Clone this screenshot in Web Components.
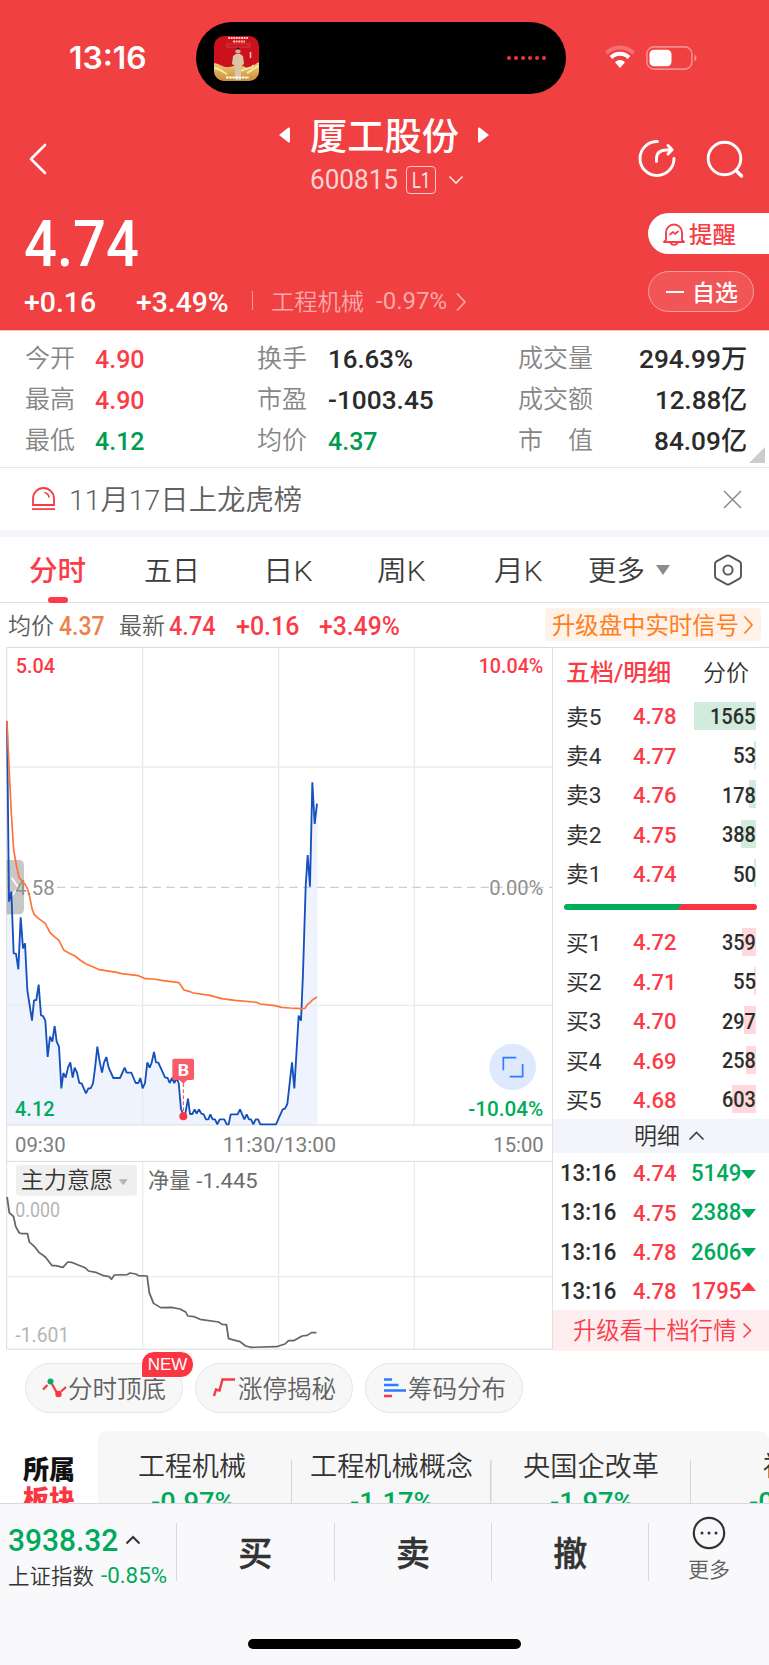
<!DOCTYPE html>
<html lang="zh-CN">
<head>
  <meta charset="UTF-8">
  <title>厦工股份 600815</title>
  <style>
    body {
      margin: 0;
      width: 769px;
      height: 1665px;
      overflow: hidden;
      background: #fff;
      color: #333;
      font-family: Roboto, "Noto Sans CJK SC", sans-serif;
      line-height: 1;
    }
  </style>
</head>
<body>
  <stock-page></stock-page>

  <script>
    // shared behaviour: open shadow root, template and styles
    class BaseElement extends HTMLElement {
      constructor() {
        super();
        this.attachShadow({ mode: 'open' });
      }

      getMarkup() {
        return '<slot></slot>';
      }

      getStyles() {
        return '';
      }

      render() {
        const template = document.createElement('template');
        template.innerHTML = `
          <style>
            :host { display: block; box-sizing: border-box; }
            * { box-sizing: border-box; }
            svg { display: block; flex: none; fill: none; }
            ${this.getStyles()}
          </style>
          ${this.getMarkup()}
        `;
        this.shadowRoot.replaceChildren(template.content.cloneNode(true));
      }

      connectedCallback() {
        this.render();
      }
    }

    // one line of text, condensed or stretched to the width in "w"
    class FitText extends BaseElement {
      getMarkup() {
        return '<span><slot></slot></span>';
      }

      getStyles() {
        const w = this.getAttribute('w');
        const size = this.getAttribute('size');
        return `
          :host { display: block; flex: none; width: ${w}px; font-size: ${size}px; line-height: 1; white-space: nowrap; }
          span { display: inline-block; vertical-align: top; transform-origin: 0 50%; }
        `;
      }

      connectedCallback() {
        this.render();
        const span = this.shadowRoot.querySelector('span');
        const natural = span.offsetWidth;
        // Han glyphs sit a little higher in the line than the digits
        const drop = /^[\u3000-\u9fff]/.test(this.textContent) ? 1.6 : 0.8;
        if (natural) {
          span.style.transform = `translateY(${drop}px) scaleX(${this.getAttribute('w') / natural})`;
        }
      }
    }

    class StatusBar extends BaseElement {
      getMarkup() {
        return `
          <fit-text class="time" w="78" size="31">13:16</fit-text>
          <div class="island">
            <svg width="45" height="45" viewBox="0 0 45 45">
              <defs>
                <clipPath id="cover"><rect width="45" height="45" rx="10"/></clipPath>
                <linearGradient id="gold" x1="0" y1="0" x2="0" y2="1">
                  <stop offset="0" stop-color="#f0cf78"/><stop offset="1" stop-color="#c78f3c"/>
                </linearGradient>
              </defs>
              <g clip-path="url(#cover)">
                <rect width="45" height="45" fill="#cb111c"/>
                <path d="M0 27c7 1 9 5 15 4s10-4 16 0 9-3 14-5v19H0z" fill="url(#gold)"/>
                <path d="M0 32c6 0 8 4 13 6M45 30c-5 2-8 5-12 7M27 35c5-4 9-1 13-6" stroke="#fae6a5" stroke-width="2"/>
                <path d="M14 2h20M19 5.500h12" stroke="#f3c6b8" stroke-width="2" stroke-dasharray="2 .6"/>
                <rect x="13" y="8" width="23" height="3" stroke="#de5a57" stroke-width=".6"/>
                <path d="M19 20l3-2h4l3 2 1 8-3 2v14h-6V30l-3-2z" fill="#dcc5a6"/>
                <circle cx="24" cy="15" r="2.600" fill="#dba98b"/>
                <path d="M21.500 14.500c0-4 5-4 5 0l-1-1h-3z" fill="#372020"/>
                <path d="M36.500 16v6" stroke="#f3c6b8" stroke-width="1.500"/>
                <path d="M12 41.500h23" stroke="#fff" stroke-width="2" stroke-dasharray="2.500 .7"/>
              </g>
            </svg>
            <div class="dots"><i></i><i></i><i></i><i></i><i></i><i></i></div>
          </div>
          <svg class="wifi" width="32" height="24" viewBox="0 0 32 24">
            <path d="M2.500 8C10 .5 22 .5 29.500 8" stroke="#fff" stroke-opacity=".25" stroke-width="4"/>
            <path d="M7 12.500c5-5 13-5 18 0" stroke="#fff" stroke-width="4"/>
            <path d="M11 17.200c3-3 7-3 10 0L16 23z" fill="#fff"/>
          </svg>
          <svg width="52" height="24" viewBox="0 0 52 24">
            <rect x=".9" y=".9" width="45" height="22.200" rx="7" stroke="#fff" stroke-opacity=".4" stroke-width="1.600"/>
            <rect x="3.500" y="3.700" width="22" height="16.600" rx="4.500" fill="#fff"/>
            <path d="M48.500 8.500c2.600 1.500 2.600 5.500 0 7z" fill="#fff" fill-opacity=".45"/>
          </svg>
        `;
      }

      getStyles() {
        return `
          :host { display: flex; align-items: center; height: 116px; padding-left: 69px; color: #fff; }
          .time { margin-top: -4px; font-family: Inter, sans-serif; font-weight: 600; }
          .island {
            display: flex; align-items: center; justify-content: space-between;
            width: 370px; height: 72px; margin: 0 39px 0 49px; padding: 0 20px 0 18px;
            border-radius: 36px; background: #000;
          }
          .dots { display: flex; gap: 3px; }
          .dots i { width: 4px; height: 4px; border-radius: 2px; background: #f2343c; }
          .wifi { margin: -2px 10px 0 -1px; }
          .wifi + svg { margin-top: -1px; }
        `;
      }
    }

    class TitleBar extends BaseElement {
      getMarkup() {
        return `
          <svg class="icon" width="20" height="34" viewBox="0 0 20 34">
            <path d="M17 3L3 17l14 14" stroke="#fff" stroke-width="2.600" stroke-linecap="round" stroke-linejoin="round"/>
          </svg>
          <div class="middle">
            <div class="name">
              <svg width="13" height="18" viewBox="0 0 13 18"><path d="M1 9L10.500 1.500Q12 1 12 3v12q0 2-1.500 1.500z" fill="#fff"/></svg>
              <fit-text w="149" size="37">厦工股份</fit-text>
              <svg width="13" height="18" viewBox="0 0 13 18"><path d="M12 9L2.500 1.500Q1 1 1 3v12q0 2 1.500 1.500z" fill="#fff"/></svg>
            </div>
            <div class="code">
              <fit-text w="88" size="27">600815</fit-text>
              <span class="level"><fit-text w="18" size="22">L1</fit-text></span>
              <svg width="16" height="10" viewBox="0 0 16 10"><path d="M1.500 1.500L8 8l6.500-6.500" stroke="#fde0e0" stroke-width="1.600"/></svg>
            </div>
          </div>
          <svg class="icon share" width="40" height="40" viewBox="0 0 40 40" stroke="#fff" stroke-width="2.900" stroke-linecap="round" stroke-linejoin="round">
            <path d="M19.500 2.500A17 17 0 1 0 36 19.500"/>
            <path d="M18.500 22.500V20q0-9 10-9h5M30 6.500l4.200 4.300-4.200 4.200"/>
          </svg>
          <svg class="icon" width="40" height="40" viewBox="0 0 40 40" stroke="#fff" stroke-width="2.900" stroke-linecap="round">
            <circle cx="18.500" cy="19.500" r="16.300"/><path d="M31 32.500l4.500 4.500" stroke-width="3.600"/>
          </svg>
        `;
      }

      getStyles() {
        return `
          :host { display: flex; align-items: center; height: 88px; padding-left: 28px; color: #fff; }
          .icon { margin-top: -3px; }
          .middle { width: 212px; height: 88px; margin: 0 148px 0 230px; }
          .name { display: flex; align-items: center; justify-content: space-between; height: 38px; font-weight: 500; }
          .code { display: flex; align-items: center; height: 51px; padding-left: 32px; color: #fcd3d3; }
          .level {
            display: flex; align-items: center; justify-content: center; width: 30px; height: 28px;
            margin: 0 12px 0 8px; border: 1.3px solid #fbc9c9; border-radius: 4px; color: #fdeaea;
          }
          .share { margin-right: 28px; }
        `;
      }
    }

    class PriceHead extends BaseElement {
      getMarkup() {
        return `
          <div class="left">
            <div class="price"><fit-text w="115" size="64">4.74</fit-text></div>
            <div class="change">
              <fit-text w="72" size="28">+0.16</fit-text>
              <fit-text class="pct" w="93" size="28">+3.49%</fit-text>
              <i></i>
              <fit-text class="soft" w="93" size="23">工程机械</fit-text>
              <fit-text class="soft num" w="71" size="23">-0.97%</fit-text>
              <svg width="12" height="20" viewBox="0 0 12 20"><path d="M2 1.500L10 10 2 18.500" stroke="#f9a9aa" stroke-width="1.600"/></svg>
            </div>
          </div>
          <div class="right">
            <div class="pill alert">
              <svg width="24" height="24" viewBox="0 0 24 24" stroke="#f83c45" stroke-width="1.900" stroke-linejoin="round" stroke-linecap="round">
                <path d="M4 18V10.500a8 8 0 0 1 16 0V18l2 2H2z"/><path d="M8.500 21c1.500 2.500 5.500 2.500 7 0"/>
                <path d="M8 12.500l3-2.500 2 2 3-2.500" stroke-width="1.700"/>
              </svg>
              <fit-text w="47" size="23">提醒</fit-text>
            </div>
            <div class="pill own"><b></b><fit-text w="46" size="23">自选</fit-text></div>
          </div>
        `;
      }

      getStyles() {
        return `
          :host { display: flex; justify-content: space-between; height: 126px; padding-left: 24px; color: #fff; }
          .price { display: flex; align-items: center; height: 80px; font-weight: 500; }
          .change { display: flex; align-items: center; height: 35px; font-weight: 500; }
          .pct { margin-left: 40px; }
          .change i { width: 1px; height: 19px; margin: -2px 18px 0 23px; background: #f79c9d; }
          .soft { color: #f9a9aa; font-weight: 350; margin-top: -3px; }
          .num { margin: -2px 8px 0 12px; font-weight: 400; }
          .right { padding-top: 9px; width: 121px; }
          .pill { display: flex; align-items: center; height: 41px; font-weight: 500; }
          .alert { padding-left: 14px; gap: 3px; border-radius: 21px 0 0 21px; background: #fff; color: #f83c45; }
          .own {
            width: 106px; margin-top: 17px; padding-left: 17px; gap: 8px;
            border: 1px solid #f79fa0; border-radius: 21px; background: #f15556;
          }
          .own b { width: 18px; height: 2px; background: #fff; }
        `;
      }
    }

    class StatGrid extends BaseElement {
      getMarkup() {
        const rows = [
          ['今开', '4.90', 'up', '换手', '16.63%', 85, '', '成交量', '294.99万', 108],
          ['最高', '4.90', 'up', '市盈', '-1003.45', 106, '', '成交额', '12.88亿', 92],
          ['最低', '4.12', 'down', '均价', '4.37', 50, 'down', '市　值', '84.09亿', 93]
        ];
        return rows.map(r => `
          <div class="row">
            <fit-text class="label" w="50" size="25">${r[0]}</fit-text>
            <fit-text class="${r[2]}" w="50" size="26.500">${r[1]}</fit-text>
            <fit-text class="label" w="50" size="25">${r[3]}</fit-text>
            <fit-text class="${r[6]}" w="${r[5]}" size="26.500">${r[4]}</fit-text>
            <fit-text class="label" w="75" size="25">${r[7]}</fit-text>
            <fit-text class="last" w="${r[9]}" size="26.500">${r[8]}</fit-text>
          </div>
        `).join('') + '<svg width="16" height="17" viewBox="0 0 16 17"><path d="M16 0v16H0z" fill="#ccc"/></svg>';
      }

      getStyles() {
        return `
          :host { position: relative; height: 137px; padding-top: 7px; border-top: 1px solid #fcc0c2; }
          .row {
            display: grid; grid-template-columns: 70px 162px 71px 190px 75px 1fr; align-items: center;
            height: 41px; padding: 0 22px 0 25px; font-weight: 500; color: #2b2b2b;
          }
          .label { font-weight: 350; color: #868686; margin-top: -4px; }
          .last { justify-self: end; }
          .up { color: #fb3c48; }
          .down { color: #009a50; }
          svg { position: absolute; right: 4px; bottom: 3px; }
        `;
      }
    }

    class NoticeBar extends BaseElement {
      getMarkup() {
        return `
          <svg width="27" height="26" viewBox="0 0 27 26" stroke="#fa3a45" stroke-width="1.800">
            <path d="M3 19V12.500a10.500 10.500 0 0 1 21 0V19zM2 23.200h23"/>
            <path d="M14.500 6.500q4 .8 4.500 5" stroke-width="1.700"/>
          </svg>
          <fit-text w="233" size="28">11月17日上龙虎榜</fit-text>
          <svg class="close" width="19" height="19" viewBox="0 0 19 19"><path d="M1 1l17 17M18 1L1 18" stroke="#8a8a8a" stroke-width="1.500"/></svg>
        `;
      }

      getStyles() {
        return `
          :host {
            display: flex; align-items: center; height: 70px; padding: 0 27px 0 30px;
            border-top: 1.500px solid #e9e9eb; border-bottom: 7px solid #f3f5f9; color: #606060; font-weight: 350;
          }
          fit-text { margin: 2px auto 0 12px; }
        `;
      }
    }

    class PeriodTabs extends BaseElement {
      getMarkup() {
        return `
          <div class="active"><fit-text w="57" size="28">分时</fit-text><i></i></div>
          <fit-text style="margin-left:58px" w="56" size="28">五日</fit-text>
          <fit-text style="margin-left:63px" w="50" size="28">日K</fit-text>
          <fit-text style="margin-left:64px" w="49" size="28">周K</fit-text>
          <fit-text style="margin-left:68px" w="49" size="28">月K</fit-text>
          <fit-text style="margin-left:45px" w="57" size="28">更多</fit-text>
          <svg style="margin-left:11px" width="14" height="10" viewBox="0 0 14 10"><path d="M0 0h14L7 10z" fill="#8c8c8c"/></svg>
          <svg style="margin-left:43px" width="30" height="32" viewBox="0 0 30 32" stroke="#555" stroke-width="1.900" stroke-linejoin="round">
            <path d="M13.500 1.800q1.500-.8 3 0l10 5.600q1.500.8 1.500 2.600v12q0 1.800-1.500 2.600l-10 5.600q-1.500.8-3 0l-10-5.600Q2 23.800 2 22V10q0-1.800 1.500-2.600z"/>
            <circle cx="15" cy="16" r="4.600"/>
          </svg>
        `;
      }

      getStyles() {
        return `
          :host { display: flex; align-items: center; height: 66px; padding-left: 29px; border-bottom: 1px solid #dedede; color: #3c3c3c; font-weight: 350; }
          .active { display: flex; flex-direction: column; align-items: center; padding-top: 20px; font-weight: 500; color: #fb3c48; }
          .active i { width: 20px; height: 6px; margin-top: 13px; border-radius: 3px; background: #fb3c48; }
        `;
      }
    }

    class QuoteLine extends BaseElement {
      getMarkup() {
        return `
          <fit-text class="label" w="46" size="23">均价</fit-text>
          <fit-text class="avg" style="margin-left:5px" w="46" size="25">4.37</fit-text>
          <fit-text class="label" style="margin-left:14px" w="46" size="23">最新</fit-text>
          <fit-text style="margin-left:4px" w="47" size="25">4.74</fit-text>
          <fit-text style="margin-left:20px" w="63" size="25">+0.16</fit-text>
          <fit-text style="margin-left:20px" w="81" size="25">+3.49%</fit-text>
          <div class="signal">
            <fit-text w="187" size="23.500">升级盘中实时信号</fit-text>
            <svg width="11" height="20" viewBox="0 0 11 20"><path d="M1.500 1.500L9 10l-7.500 8.500" stroke="#ff7f1f" stroke-width="1.700"/></svg>
          </div>
        `;
      }

      getStyles() {
        return `
          :host { display: flex; align-items: center; height: 44px; padding: 0 8px; color: #fb3c48; font-weight: 500; }
          .label { color: #5c5c5c; font-weight: 350; margin-top: -2px; }
          .avg { color: #ee8148; }
          .signal {
            display: flex; align-items: center; justify-content: space-between; width: 216px; height: 33px;
            margin: -1px 0 0 auto; padding: 0 7px; border-radius: 4px; background: #fff2e9; color: #ff7f1f; font-weight: 400;
          }
        `;
      }
    }

    // price and net volume charts, three drawing units to a pixel
    class TrendChart extends BaseElement {
      getMarkup() {
        const price = '21,243 27,785 34,755 41,940 48,941 55,988 62,832 69,925 75,910 82,1050 96,1142 102,1081 109,1080 116,1034 123,1126 129,1128 136,1142 143,1251 150,1190 157,1205 164,1158 170,1205 177,1220 184,1345 190,1299 197,1313 204,1283 211,1267 218,1313 224,1283 231,1298 238,1329 245,1330 258,1360 265,1345 272,1345 279,1330 285,1285 292,1220 299,1265 306,1298 312,1268 319,1251 326,1283 340,1314 360,1314 374,1283 380,1298 394,1298 407,1329 415,1329 421,1314 428,1345 435,1329 442,1267 449,1283 455,1268 462,1236 468,1267 475,1268 495,1312 503,1314 509,1329 516,1314 523,1329 530,1314 536,1329 543,1407 550,1424 556,1420 564,1376 570,1422 577,1422 584,1408 590,1421 597,1408 604,1421 611,1423 618,1438 625,1438 631,1423 638,1438 645,1438 652,1453 659,1438 673,1438 680,1453 686,1453 692,1423 713,1423 720,1408 733,1438 740,1423 747,1438 753,1438 760,1453 767,1438 774,1438 781,1453 828,1453 848,1408 855,1406 862,1392 876,1267 883,1345 896,1127 903,1142 909,1000 917,740 923,645 930,740 937,427 944,552 951,491';
        const average = '21,242 27,380 34,520 41,630 50,680 57,712 75,733 82,745 89,770 96,806 103,824 115,835 136,850 150,878 163,890 177,901 191,930 205,938 225,948 240,960 258,972 280,981 298,989 350,997 365,1001 415,1007 437,1016 460,1017 490,1022 537,1028 552,1050 567,1054 580,1059 630,1066 665,1076 705,1081 770,1087 780,1092 825,1097 845,1102 870,1104 905,1106 915,1105 923,1093 930,1088 937,1080 951,1071';
        const net = '20,261 26,308 38,320 44,350 54,369 62,371 77,371 82,396 96,409 110,428 127,441 146,467 156,467 176,472 190,456 200,457 238,473 248,483 268,487 290,497 306,500 312,508 320,495 356,494 364,489 380,492 388,497 412,498 418,548 430,580 450,593 480,592 504,597 520,606 526,618 544,620 560,628 612,636 622,643 634,644 640,686 672,695 688,708 704,712 774,710 798,702 808,692 822,692 846,678 860,676 872,668 886,668';
        const text = (x, y, w, size, label, cls = '') =>
          `<text x="${x}" y="${y}" textLength="${w}" lengthAdjust="spacingAndGlyphs" font-size="${size}" class="${cls}">${label}</text>`;
        return `
          <svg width="553" height="703" viewBox="0 21 1659 2109">
            <polygon points="21,1454 ${price} 953,491 953,1454" fill="#eff3fe"/>
            <path class="grid" d="M428 22v1433M836 22v1433M1243 22v1433M20 381h1638M20 1096h1638M428 1564v564M836 1564v564M1243 1564v564M20 1910h1638"/>
            <path class="frame" d="M20 22.500h1638v2105H20zM20 1455h1638M20 1564h1638"/>
            <path d="M171 742h1487" stroke="#c3d0d9" stroke-width="4" stroke-dasharray="25 16"/>
            <path d="M20 660h36q16 0 16 16v131q0 16-16 16H20z" fill="#000" fill-opacity=".22"/>
            <path d="M35 713l19 28-19 28" stroke="#fff" stroke-width="5"/>
            ${text(47, 98, 118, 63, '5.04', 'up')}
            ${text(45, 764, 119, 63, '4.58', 'flat')}
            ${text(45, 1427, 119, 63, '4.12', 'down')}
            ${text(1436, 98, 194, 63, '10.04%', 'up')}
            ${text(1468, 764, 162, 63, '0.00%', 'flat')}
            ${text(1405, 1427, 225, 63, '-10.04%', 'down')}
            ${text(45, 1535, 152, 63, '09:30', 'axis')}
            ${text(668, 1535, 340, 63, '11:30/13:00', 'axis')}
            ${text(1480, 1535, 151, 63, '15:00', 'axis')}
            <polyline points="${price}" stroke="#1550bc" stroke-width="5.500" stroke-linejoin="bevel"/>
            <polyline points="${average}" stroke="#ff7333" stroke-width="5" stroke-linejoin="round"/>

            <path d="M550 1330v90" stroke="#fb3c48" stroke-width="3" stroke-dasharray="11 7"/>
            <circle cx="550" cy="1429" r="12" fill="#fb3345"/>
            <path d="M522 1256h55q5 0 5 5v54q0 5-5 5h-15l-12 11-12-11h-16q-5 0-5-5v-54q0-5 5-5z" fill="#fb5b69"/>
            <text x="533" y="1308" font-size="50" textLength="34" lengthAdjust="spacingAndGlyphs" class="mark">B</text>

            <circle cx="1538" cy="1281" r="70" fill="#dfe9fe"/>
            <path d="M1510 1291v-38h39M1529 1310h39v-38" stroke="#2f7cff" stroke-width="5"/>

            <rect x="48" y="1575" width="363" height="92" rx="10" fill="#efefef"/>
            ${text(62, 1645, 277, 68, '主力意愿', 'dark')}
            <path d="M356 1618h27l-13 18z" fill="#b5b5b5"/>
            ${text(444, 1644, 127, 64, '净量', 'gray')}
            ${text(589, 1643, 184, 63, '-1.445', 'gray')}
            ${text(46, 1731, 134, 58, '0.000', 'pale')}
            ${text(46, 2106, 162, 58, '-1.601', 'pale')}
            <g transform="translate(0 1410) scale(1.0714 1)">
              <polyline points="${net}" stroke="#666" stroke-width="5" stroke-linejoin="round"/>
            </g>
          </svg>
        `;
      }

      getStyles() {
        return `
          text { font-weight: 500; }
          .grid { stroke: #ebebeb; stroke-width: 4; }
          .frame { stroke: #dcdcdc; stroke-width: 3; }
          .up { fill: #fb3c48; }
          .down { fill: #00aa5b; }
          .flat { fill: #8f8f8f; font-weight: 400; }
          .axis { fill: #7d7d7d; font-weight: 400; }
          .dark { fill: #333; font-weight: 350; }
          .gray { fill: #6c6c6c; font-weight: 400; }
          .pale { fill: #b5b5b5; font-weight: 400; }
          .mark { fill: #fff; font-weight: 700; }
        `;
      }
    }

    // one price level: name, price, volume and its share of the largest volume
    class BookRow extends BaseElement {
      getMarkup() {
        const volume = this.getAttribute('volume');
        return `
          <fit-text w="35" size="22">${this.getAttribute('name')}</fit-text>
          <fit-text class="price" w="44" size="22.500">${this.getAttribute('price')}</fit-text>
          <div class="volume"><fit-text w="${volume.length * 11.4}" size="21.500">${volume}</fit-text></div>
        `;
      }

      getStyles() {
        const bar = Math.max(2, 62 * this.getAttribute('volume') / 1565);
        const color = this.getAttribute('side') === 'sell' ? '#d1ecdd' : '#fed8da';
        return `
          :host { display: grid; grid-template-columns: 67px 1fr 62px; align-items: center; height: 39.4px; padding: 0 13px 0 13px; }
          .price { color: #fb3c48; font-weight: 500; }
          .volume {
            display: flex; align-items: center; justify-content: flex-end; height: 28px; font-weight: 500; color: #2d2d2d;
            background: linear-gradient(${color}, ${color}) right / ${bar}px 100% no-repeat;
          }
        `;
      }
    }

    class TickRow extends BaseElement {
      getMarkup() {
        const up = this.hasAttribute('up');
        const shape = up ? 'M0 9h15L8.500 1q-1-1-2 0z' : 'M0 0h15L8.500 8q-1 1-2 0z';
        return `
          <fit-text w="56" size="23">13:16</fit-text>
          <fit-text class="price" w="44" size="22.500">${this.getAttribute('price')}</fit-text>
          <fit-text class="${up ? 'up' : 'down'}" w="50" size="23">${this.getAttribute('volume')}</fit-text>
          <svg width="15" height="9" viewBox="0 0 15 9"><path d="${shape}" fill="${up ? '#fb3c48' : '#00aa5b'}"/></svg>
        `;
      }

      getStyles() {
        return `
          :host { display: flex; align-items: center; height: 39.25px; padding-left: 7px; font-weight: 500; color: #2d2d2d; }
          .price { margin: 0 14px 0 17px; color: #fb3c48; }
          .up { color: #fb3c48; }
          .up + svg { margin-top: -7px; }
          .down { color: #00aa5b; }
          .down + svg { margin-top: 3px; }
        `;
      }
    }

    class OrderBook extends BaseElement {
      getMarkup() {
        const sell = [['卖5', '4.78', 1565], ['卖4', '4.77', 53], ['卖3', '4.76', 178], ['卖2', '4.75', 388], ['卖1', '4.74', 50]];
        const buy = [['买1', '4.72', 359], ['买2', '4.71', 55], ['买3', '4.70', 297], ['买4', '4.69', 258], ['买5', '4.68', 603]];
        const rows = (list, side) => list.map(([name, price, volume]) =>
          `<book-row side="${side}" name="${name}" price="${price}" volume="${volume}"></book-row>`).join('');
        return `
          <div class="head">
            <fit-text class="on" w="105" size="23.500">五档/明细</fit-text>
            <fit-text class="off" w="46" size="23">分价</fit-text>
          </div>
          ${rows(sell, 'sell')}
          <div class="ratio"><i></i></div>
          ${rows(buy, 'buy')}
          <div class="detail">
            <fit-text w="46" size="23">明细</fit-text>
            <svg width="17" height="10" viewBox="0 0 17 10"><path d="M1.500 8.500l7-7 7 7" stroke="#444" stroke-width="1.700"/></svg>
          </div>
          <tick-row price="4.74" volume="5149"></tick-row>
          <tick-row price="4.75" volume="2388"></tick-row>
          <tick-row price="4.78" volume="2606"></tick-row>
          <tick-row price="4.78" volume="1795" up></tick-row>
          <div class="upgrade">
            <fit-text w="164" size="23.500">升级看十档行情</fit-text>
            <svg width="11" height="17" viewBox="0 0 11 17"><path d="M1.500 1.500l7 7-7 7" stroke="#fb3c48" stroke-width="1.500"/></svg>
          </div>
        `;
      }

      getStyles() {
        return `
          :host { flex: 1; border-top: 1px solid #dcdcdc; }
          .head { display: flex; align-items: center; justify-content: space-between; height: 48px; padding: 0 20px 0 13px; }
          .on { color: #fb3c48; font-weight: 500; }
          .off { margin-top: -1px; font-weight: 350; }
          .ratio { display: flex; align-items: center; height: 29px; padding: 0 12px 0 11px; }
          .ratio i {
            flex: 1; height: 6px; border-radius: 3px;
            background: linear-gradient(126deg, #00ad5c 59.500%, #fb3541 59.800%);
          }
          .detail { display: flex; align-items: center; height: 34px; padding-left: 81px; gap: 8px; background: #f3f5fa; font-weight: 350; }
          .detail fit-text { margin-top: -2px; }
          .upgrade { display: flex; align-items: center; height: 41px; padding-left: 20px; gap: 5px; background: #feeef0; color: #fb3c48; font-weight: 350; }
          .upgrade fit-text { margin-top: -2px; }
        `;
      }
    }

    class ToolButton extends BaseElement {
      getMarkup() {
        const icons = {
          turn: '<path d="M1 12.500l4.500-4.500M10 7l5 9M19 14.500l5-4.500" stroke="#fb3541" stroke-width="2.300"/><circle cx="8.500" cy="4.500" r="3" fill="#00ad5c"/><circle cx="16.500" cy="17" r="3.200" fill="#fb3541"/>',
          limit: '<path d="M2 19l2-6.500 3.500 1L10.500 2.500h12.500" stroke="#f23b46" stroke-width="2.400"/>',
          chips: '<path d="M2 2.500h8M2 8h14.500M2 13.500h22" stroke="#2f7cff" stroke-width="2.500"/><path d="M2 19h8" stroke="#fb3541" stroke-width="2.500"/>'
        };
        return `
          <svg width="25" height="22" viewBox="0 0 25 22">${icons[this.getAttribute('icon')]}</svg>
          <fit-text w="98" size="24.500">${this.getAttribute('label')}</fit-text>
          <slot></slot>
        `;
      }

      getStyles() {
        return `
          :host {
            display: flex; align-items: center; position: relative; width: 158px; height: 50px; padding-left: 16px; gap: 1px;
            border: 1px solid #e6e6e6; border-radius: 25px; background: #f7f7f7; color: #606060; font-weight: 350;
          }
          ::slotted(b) {
            position: absolute; left: 115px; top: -13px; width: 53px; height: 27px; border: 1px solid #fff;
            border-radius: 13px 13px 13px 2px; background: #fb3541; color: #fff;
            font: 400 17px/26px "Liberation Sans", sans-serif; text-align: center;
          }
        `;
      }
    }

    class SectorStrip extends BaseElement {
      getMarkup() {
        const sectors = [['工程机械', 108, '-0.97%'], ['工程机械概念', 163, '-1.17%'], ['央国企改革', 136, '-1.97%'], ['福建', 56, '-0.87%']];
        return `
          <div class="title">
            <fit-text w="52" size="26">所属</fit-text>
            <fit-text class="red" w="52" size="26">板块</fit-text>
          </div>
          <div class="list">
            ${sectors.map(([name, w, pct]) => `
              <div class="sector">
                <fit-text w="${w}" size="27">${name}</fit-text>
                <fit-text class="pct" w="83" size="25">${pct}</fit-text>
              </div>
            `).join('')}
          </div>
        `;
      }

      getStyles() {
        return `
          :host { display: flex; height: 72px; overflow: hidden; }
          .title { flex: none; width: 98px; padding: 24px 0 0 23px; color: #111; font-weight: 900; }
          .red { margin-top: 4px; color: #fb3541; }
          .list { display: flex; flex: 1; overflow: hidden; height: 110px; border-radius: 9px; background: #f7f7f7; }
          .sector {
            display: flex; flex: none; flex-direction: column; align-items: center; gap: 10px; width: 199.500px; padding-top: 21px;
            background: linear-gradient(#d5d5d5, #d5d5d5) right 29px / 1.500px 60px no-repeat; color: #333; font-weight: 350;
          }
          .sector:first-child { width: 194px; padding-right: 6px; }
          .pct { color: #00aa5b; font-weight: 500; }
        `;
      }
    }

    class TradeBar extends BaseElement {
      getMarkup() {
        return `
          <div class="bar">
            <div class="index">
              <div class="line">
                <fit-text class="value" w="110" size="31">3938.32</fit-text>
                <svg width="16" height="10" viewBox="0 0 16 10"><path d="M1.500 8.500L8 2l6.500 6.500" stroke="#333" stroke-width="2"/></svg>
              </div>
              <div class="line small">
                <fit-text w="86" size="21.500">上证指数</fit-text>
                <fit-text class="green" w="66" size="22">-0.85%</fit-text>
              </div>
            </div>
            <div class="action"><fit-text w="34" size="34">买</fit-text></div>
            <div class="action"><fit-text w="34" size="34">卖</fit-text></div>
            <div class="action"><fit-text w="34" size="34">撤</fit-text></div>
            <div class="more">
              <svg width="34" height="34" viewBox="0 0 34 34">
                <circle cx="17" cy="17" r="15.200" stroke="#333" stroke-width="2.200"/>
                <path d="M10 17h.01M17 17h.01M24 17h.01" stroke="#333" stroke-width="3" stroke-linecap="round"/>
              </svg>
              <fit-text w="42" size="21">更多</fit-text>
            </div>
          </div>
          <i></i>
        `;
      }

      getStyles() {
        return `
          :host { height: 162px; padding-top: 19px; border-top: 1.500px solid #d9d9dd; background: #f9f9fc; }
          .bar { display: flex; height: 58px; }
          .index { width: 176px; padding-left: 8px; }
          .line { display: flex; align-items: center; height: 37px; gap: 7px; }
          .line svg { margin-top: -3px; }
          .value { margin-top: -4px; color: #00aa5b; font-weight: 500; }
          .small { height: 30px; font-weight: 350; }
          .green { color: #00aa5b; font-weight: 450; }
          .action { display: flex; align-items: center; justify-content: center; width: 157.700px; border-left: 1px solid #dadadd; font-weight: 500; }
          .action:nth-child(4) { border-right: 1px solid #dadadd; }
          .action fit-text { -webkit-text-stroke: .4px #2d2d2d; }
          .more { display: flex; flex: 1; flex-direction: column; align-items: center; gap: 8px; height: 70px; margin-top: -7px; color: #606060; font-weight: 350; }
          i { display: block; width: 273px; height: 10px; margin: 58px auto 0; border-radius: 5px; background: #000; }
        `;
      }
    }

    class StockPage extends BaseElement {
      getMarkup() {
        return `
          <header>
            <status-bar></status-bar>
            <title-bar></title-bar>
            <price-head></price-head>
          </header>
          <stat-grid></stat-grid>
          <notice-bar></notice-bar>
          <period-tabs></period-tabs>
          <quote-line></quote-line>
          <main>
            <trend-chart></trend-chart>
            <order-book></order-book>
          </main>
          <nav>
            <tool-button icon="turn" label="分时顶底"><b>NEW</b></tool-button>
            <tool-button icon="limit" label="涨停揭秘"></tool-button>
            <tool-button icon="chips" label="筹码分布"></tool-button>
          </nav>
          <sector-strip></sector-strip>
          <trade-bar></trade-bar>
        `;
      }

      getStyles() {
        return `
          header { height: 330px; background: #f04042; }
          main { display: flex; height: 703px; }
          nav { display: flex; gap: 12px; height: 81px; padding: 13px 0 0 25px; }
        `;
      }
    }

    customElements.define('fit-text', FitText);
    customElements.define('status-bar', StatusBar);
    customElements.define('title-bar', TitleBar);
    customElements.define('price-head', PriceHead);
    customElements.define('stat-grid', StatGrid);
    customElements.define('notice-bar', NoticeBar);
    customElements.define('period-tabs', PeriodTabs);
    customElements.define('quote-line', QuoteLine);
    customElements.define('trend-chart', TrendChart);
    customElements.define('book-row', BookRow);
    customElements.define('tick-row', TickRow);
    customElements.define('order-book', OrderBook);
    customElements.define('tool-button', ToolButton);
    customElements.define('sector-strip', SectorStrip);
    customElements.define('trade-bar', TradeBar);
    customElements.define('stock-page', StockPage);
  </script>
</body>
</html>
